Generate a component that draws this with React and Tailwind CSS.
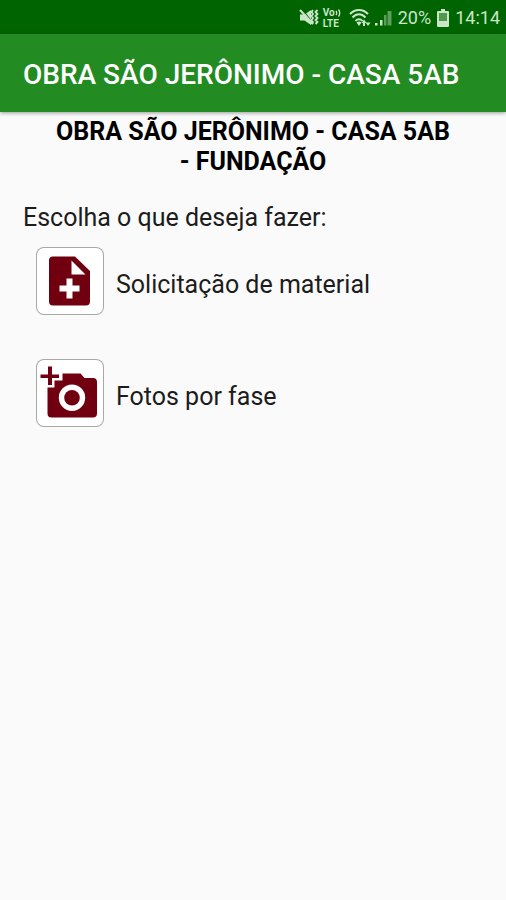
import React from 'react';

const StatusBar = () => {
  return (
    <div className="flex h-[34px] items-center justify-end bg-[#006400] px-1.5 pt-0.5 text-[#c9e6c9]">
      <svg className="mr-1 h-5 w-5" viewBox="0 0 20 20" fill="currentColor">
        <path d="M1 6.500h4.500L12 2v15l-6.500-4.500H1z" />
        <path d="M3 1l11 14" stroke="#006400" strokeWidth="1.2" />
        <path d="M1 2l13 14" stroke="currentColor" strokeWidth="2" />
        <path d="M14 2l-1.500 2 1.500 2-1.500 2 1.500 2-1.500 2 1.500 2-1.500 2M18.500 2l-2 2 2 2-2 2 2 2-2 2 2 2-2 2" fill="none" stroke="currentColor" strokeWidth="1.8" />
      </svg>
      <div className="mr-2 w-[18px] text-[10px] font-bold leading-[11px]">
        <div className="flex items-center">
          Vo
          <svg className="h-2 w-1.5" viewBox="0 0 6 8" fill="none" stroke="currentColor" strokeWidth="1.3">
            <path d="M1 2q1.500 2 0 4M3.500 0.500q2.500 3.500 0 7" />
          </svg>
        </div>
        <div>LTE</div>
      </div>
      <svg className="mr-1 h-5 w-[22px]" viewBox="0 0 22 20" fill="none" stroke="currentColor" strokeWidth="2">
        <path d="M1 6C6 0.500 14 0.500 19 6M3.500 9.500c4-4.200 9-4.200 13 0M6.500 13c2-2.500 5-2.500 7 0" />
        <path d="M7.500 14.500q2.500-2 5 0L10 18z" fill="currentColor" stroke="none" />
        <path d="M12.500 15l2.500-3.500 2.500 3.500h-1.500v3h-2v-3zM16.500 14.500h5l-2.500 3.500z" fill="currentColor" stroke="none" />
      </svg>
      <svg className="mr-1.5 h-5 w-[17px]" viewBox="0 0 17 20" fill="currentColor">
        <path d="M0 15h2.500v2.500H0zM5 12h2.500v5.500H5z" />
        <path d="M9 7h2.500v10.500H9zM12.500 3h4v14.500h-4z" opacity="0.45" />
      </svg>
      <span className="text-[18px] leading-6">20%</span>
      <svg className="mx-1.5 h-[18px] w-3" viewBox="0 0 12 18" fill="currentColor">
        <path d="M4 0h4v2h3a1 1 0 0 1 1 1v14a1 1 0 0 1-1 1H1a1 1 0 0 1-1-1V3a1 1 0 0 1 1-1h3z" />
        <path d="M2 4h8v8H2z" fill="#006400" opacity="0.6" />
      </svg>
      <span className="text-[18px] leading-6">14:14</span>
    </div>
  );
};

const MaterialIcon = () => (
  <svg className="h-[68px] w-[68px]" viewBox="0 0 68 68" fill="#70000f" aria-hidden="true">
    <path
      fillRule="evenodd"
      d="M17 9.500H39L54 24V54.500a4 4 0 0 1-4 4H17a4 4 0 0 1-4-4V13.500a4 4 0 0 1 4-4zM35.500 13.500V27.500H49.500zM30.500 31.500V38.500H23.500V44.500H30.500V51.500H36.500V44.500H43.500V38.500H36.500V31.500z"
    />
  </svg>
);

const PhotoIcon = () => (
  <svg className="h-[68px] w-[68px]" viewBox="0 0 68 68" fill="#70000f" aria-hidden="true">
    <path d="M12 7.500h4v8H23v3.500h-7v7h-4v-7H4.500v-3.500H12z" />
    <path
      fillRule="evenodd"
      d="M26.500 14.500H44.500L48.500 19H57a4 4 0 0 1 4 4V54.500a4 4 0 0 1-4 4H15.500a4 4 0 0 1-4-4V28.500H18.500V21.500H26.500zM36 25.500a13.200 13.200 0 1 0 0 26.400a13.200 13.200 0 1 0 0-26.400z"
    />
    <circle cx="36" cy="38.700" r="7.800" />
  </svg>
);

const options = [
  { id: 'material', label: 'Solicitação de material', Icon: MaterialIcon },
  { id: 'fotos', label: 'Fotos por fase', Icon: PhotoIcon },
];

const App = () => {
  return (
    <div className="min-h-screen w-full bg-[#fafafa] font-['Roboto',sans-serif] text-[#1c1c1c]">
      <StatusBar />
      <header className="relative flex h-[78px] items-center bg-[#228b22] px-[23px] pt-1 shadow-[0_1px_4px_rgba(0,0,0,0.4)]">
        <h1 className="text-[28px] font-medium leading-8 text-white">OBRA SÃO JERÔNIMO - CASA 5AB</h1>
      </header>
      <main className="px-[23px] pt-[5px]">
        <h2 className="text-center text-[25px] font-bold leading-[30px] text-black">
          OBRA SÃO JERÔNIMO - CASA 5AB
          <br />- FUNDAÇÃO
        </h2>
        <p className="mt-[25px] text-[25px] leading-8">Escolha o que deseja fazer:</p>
        <div className="mt-[13px] flex flex-col gap-11 pl-[13px]">
          {options.map(({ id, label, Icon }) => (
            <div key={id} className="flex items-center gap-3">
              <button
                id={id}
                aria-labelledby={`${id}-label`}
                className="flex h-[68px] w-[68px] shrink-0 items-center justify-center rounded-lg bg-white ring-1 ring-inset ring-[#a8a8a8]"
              >
                <Icon />
              </button>
              <label id={`${id}-label`} htmlFor={id} className="pt-2 text-[25px] leading-8">
                {label}
              </label>
            </div>
          ))}
        </div>
      </main>
    </div>
  );
};

export default App;
